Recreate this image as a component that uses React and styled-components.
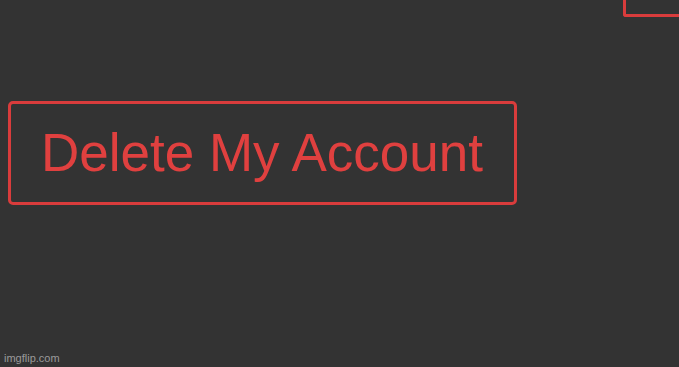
import React from "react";
import styled, { createGlobalStyle } from "styled-components";

const GlobalStyle = createGlobalStyle`
  html, body {
    margin: 0;
    padding: 0;
    background-color: #333333;
  }
`;

const Page = styled.div`
  width: 679px;
  height: 367px;
  display: flex;
  flex-direction: column;
  background-color: #333333;
  font-family: "Liberation Sans", Arial, sans-serif;
  overflow: hidden;
`;

const TopBar = styled.div`
  display: flex;
  justify-content: flex-end;
`;

const CornerButton = styled.div`
  width: 53px;
  height: 14px;
  border-left: 3px solid #d93c3c;
  border-bottom: 3px solid #d93c3c;
  border-bottom-left-radius: 3px;
`;

const Content = styled.div`
  padding: 84px 0 0 8px;
`;

const DangerButton = styled.button`
  width: 509px;
  height: 104px;
  box-sizing: border-box;
  display: flex;
  align-items: center;
  padding: 0 0 2px 30px;
  background: transparent;
  border: 3px solid #d93c3c;
  border-radius: 5px;
  color: #e0403f;
  font-family: "Liberation Sans", Arial, sans-serif;
  font-size: 53px;
  line-height: 1;
  cursor: pointer;
`;

const Watermark = styled.div`
  margin-top: auto;
  padding: 0 0 3px 4px;
  font-size: 11px;
  color: #9a9a9a;
`;

const App = () => {
  return (
    <Page>
      <GlobalStyle />
      <TopBar>
        <CornerButton />
      </TopBar>
      <Content>
        <DangerButton>Delete My Account</DangerButton>
      </Content>
      <Watermark>imgflip.com</Watermark>
    </Page>
  );
};

export default App;
